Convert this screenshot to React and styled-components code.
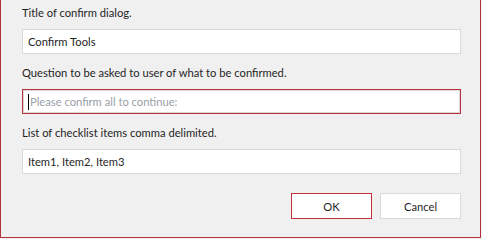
import styled, { createGlobalStyle } from 'styled-components';

const Global = createGlobalStyle`
  html, body {
    margin: 0;
    padding: 0;
    background: #f0f0f0;
  }
  body {
    font-family: Lato, "Noto Sans", sans-serif;
    font-size: 11.2px;
    color: #1f1f1f;
  }
`

const Frame = styled.div`
  width: 481px;
  height: 238px;
  box-sizing: border-box;
  border: 1px solid #b5333e;
  border-top: none;
  background: #f0f0f0;
  padding: 2px 19px 0 21px;
  display: flex;
  flex-direction: column;
`

const Label = styled.div`
  line-height: 18px;
  margin: ${({ $first }) => ($first ? '0' : '8px')} 0 9px;
  padding-top: 2px;
  height: 16px;
  white-space: nowrap;
`

const TextBox = styled.div`
  height: 25px;
  box-sizing: border-box;
  background: #fff;
  border: 1px solid ${({ $focused }) => ($focused ? '#b8333d' : '#d9d9d9')};
  box-shadow: ${({ $focused }) => ($focused ? 'inset 0 0 0 1px #d9d9d9' : 'none')};
  display: flex;
  align-items: center;
  padding: 0 5px;
  white-space: nowrap;
`

const Caret = styled.span`
  display: inline-block;
  width: 1px;
  height: 16px;
  background: #000;
  margin-right: 1px;
`

const Placeholder = styled.span`
  color: #99a0a8;
`

const Buttons = styled.div`
  display: flex;
  justify-content: flex-end;
  gap: 8px;
  margin-top: 19px;
`

const Button = styled.button`
  width: 81px;
  height: 26px;
  box-sizing: border-box;
  font: inherit;
  color: #1f1f1f;
  background: #fff;
  border: 1px solid ${({ $primary }) => ($primary ? '#c2303a' : '#d9d9d9')};
  padding: 0;
  cursor: pointer;
`

export default function App() {
  return (
    <>
      <Global />
      <Frame>
        <Label $first>Title of confirm dialog.</Label>
        <TextBox>Confirm Tools</TextBox>
        <Label>Question to be asked to user of what to be confirmed.</Label>
        <TextBox $focused>
          <Caret />
          <Placeholder>Please confirm all to continue:</Placeholder>
        </TextBox>
        <Label>List of checklist items comma delimited.</Label>
        <TextBox>Item1, Item2, Item3</TextBox>
        <Buttons>
          <Button $primary>OK</Button>
          <Button>Cancel</Button>
        </Buttons>
      </Frame>
    </>
  )
}
